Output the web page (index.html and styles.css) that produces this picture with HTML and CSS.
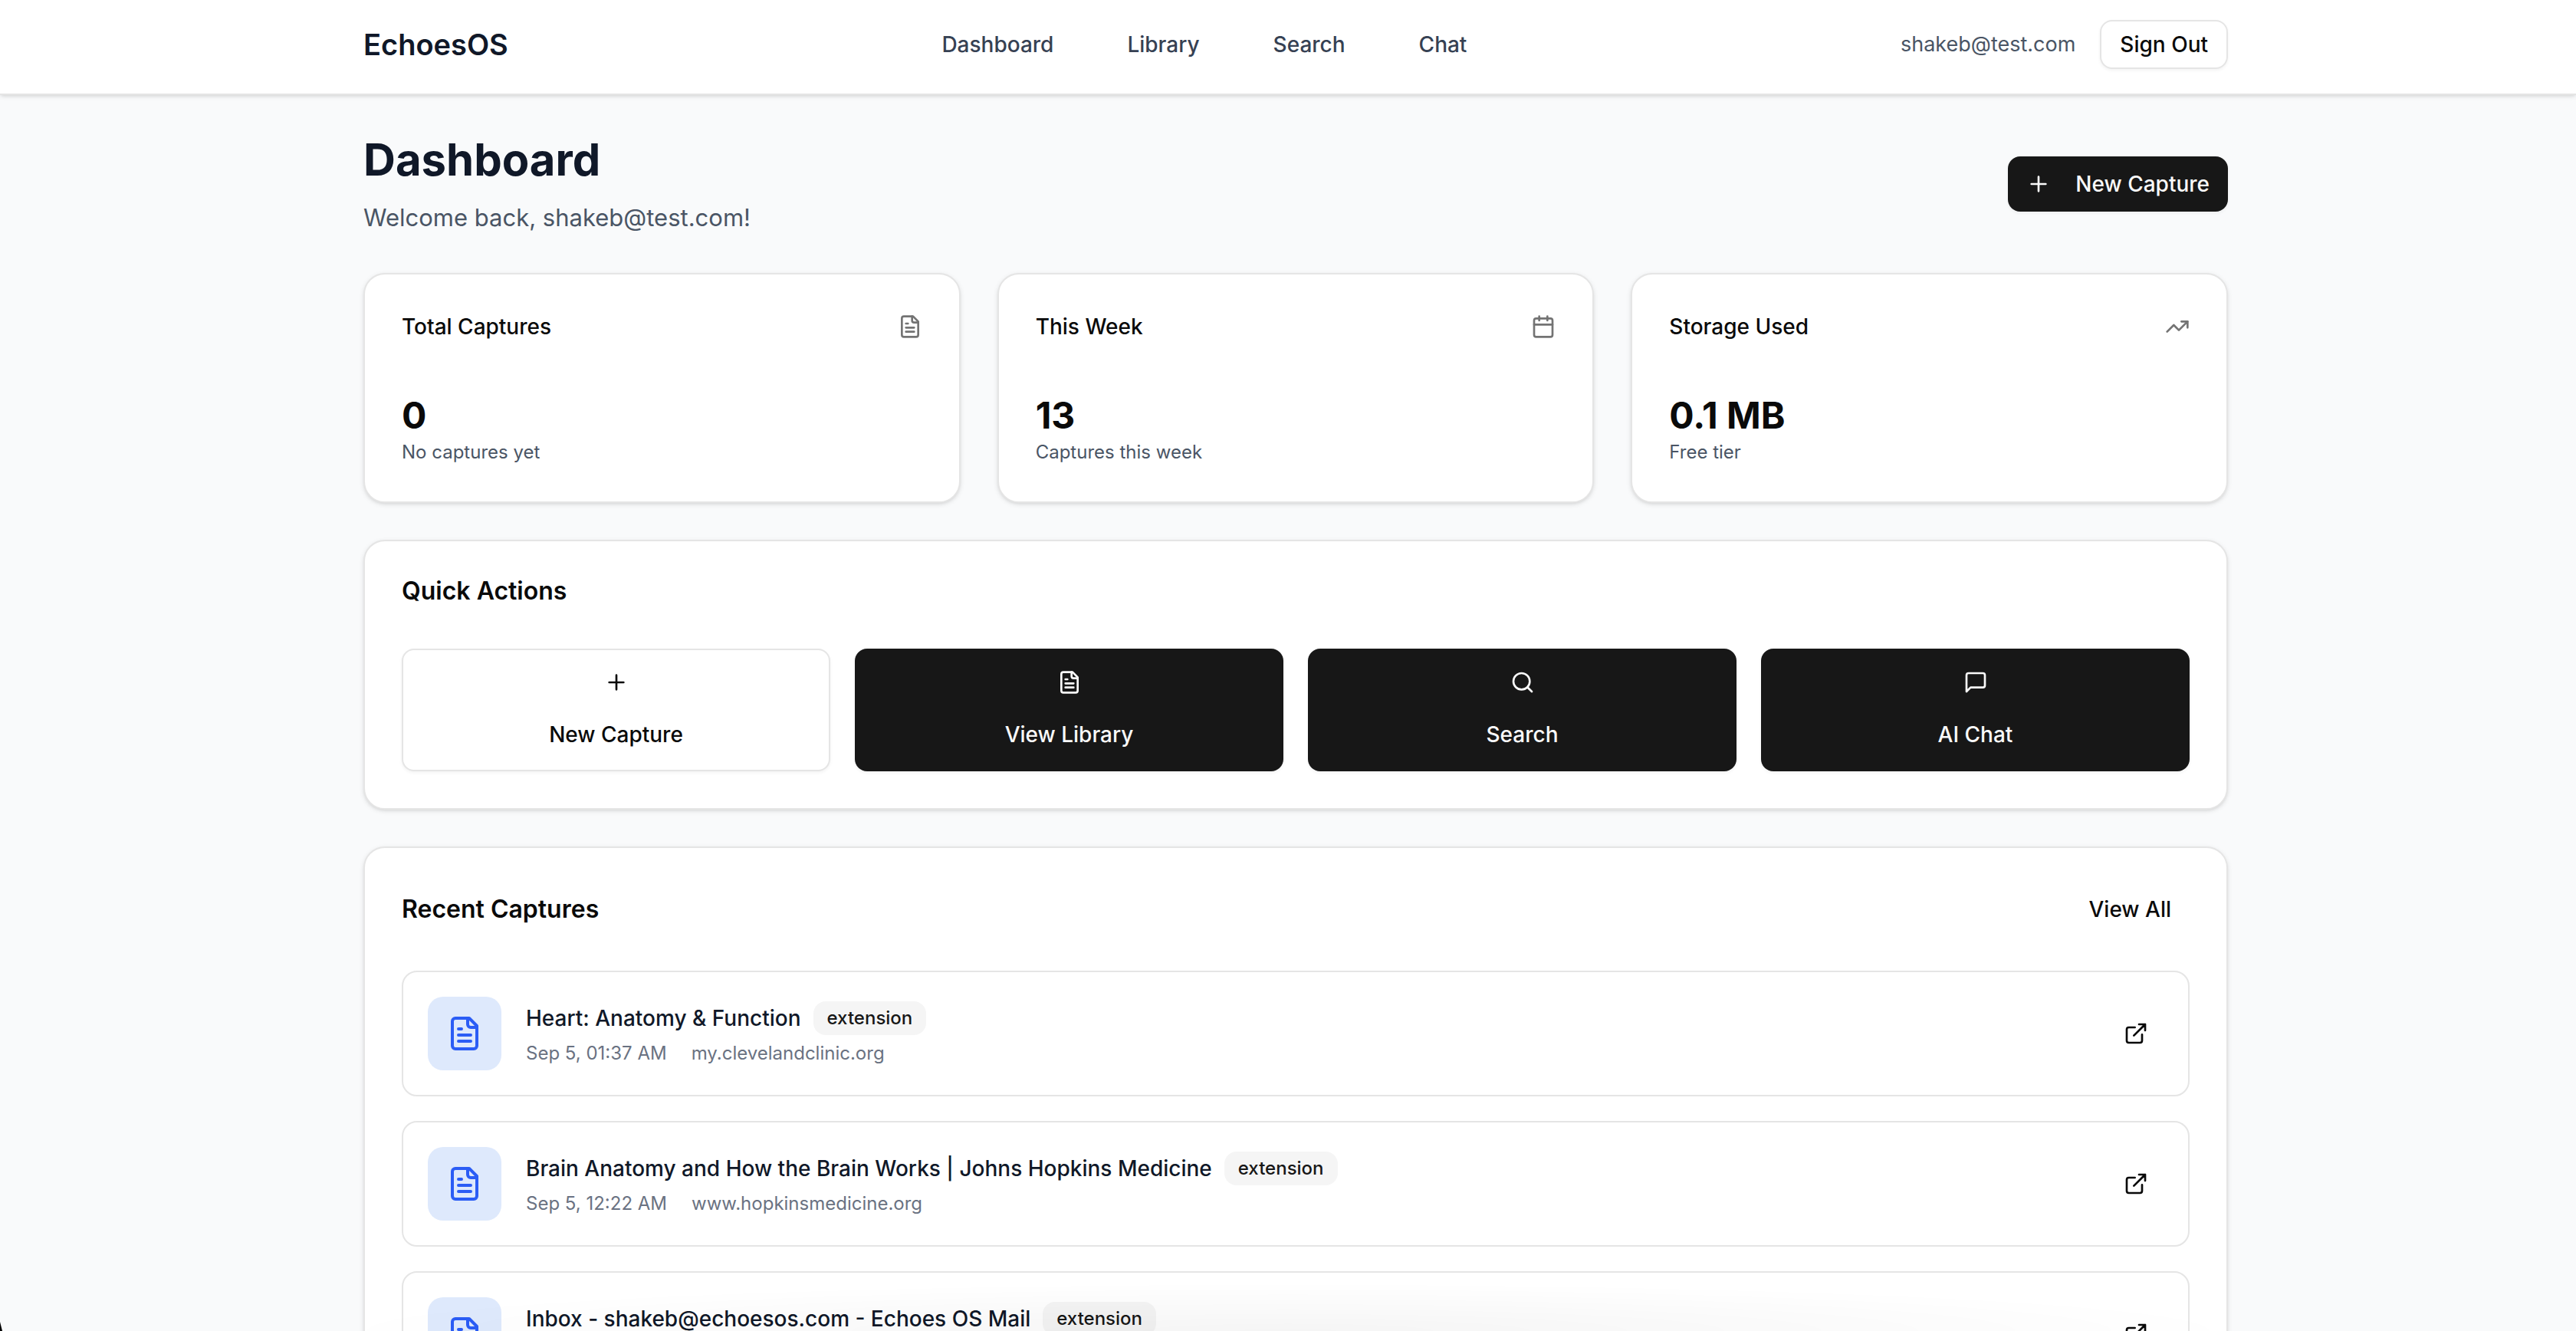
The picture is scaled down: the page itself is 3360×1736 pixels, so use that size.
FILE: index.html
```html
<!DOCTYPE html>
<html lang="en">
<head>
  <meta charset="UTF-8">
  <meta name="viewport" content="width=device-width, initial-scale=1.0">
  <title>EchoesOS</title>
  <link rel="stylesheet" href="styles.css">
</head>
<body>
  <!-- shared icons -->
  <svg class="sprite" aria-hidden="true">
    <symbol id="i-plus" viewBox="0 0 24 24"><path d="M5 12h14M12 5v14"/></symbol>
    <symbol id="i-file" viewBox="0 0 24 24">
      <path d="M15 2H6a2 2 0 0 0-2 2v16a2 2 0 0 0 2 2h12a2 2 0 0 0 2-2V7Z"/>
      <path d="M14 2v4a2 2 0 0 0 2 2h4M10 9H8M16 13H8M16 17H8"/>
    </symbol>
    <symbol id="i-calendar" viewBox="0 0 24 24">
      <path d="M8 2v4M16 2v4M3 10h18"/>
      <rect x="3" y="4" width="18" height="18" rx="2"/>
    </symbol>
    <symbol id="i-trend" viewBox="0 0 24 24"><path d="M16 7h6v6"/><path d="m22 7-8.500 8.500-5-5L2 17"/></symbol>
    <symbol id="i-search" viewBox="0 0 24 24"><circle cx="11" cy="11" r="8"/><path d="m21 21-4.340-4.340"/></symbol>
    <symbol id="i-chat" viewBox="0 0 24 24"><path d="M21 15a2 2 0 0 1-2 2H7l-4 4V5a2 2 0 0 1 2-2h14a2 2 0 0 1 2 2z"/></symbol>
    <symbol id="i-external" viewBox="0 0 24 24">
      <path d="M15 3h6v6M10 14 21 3M18 13v6a2 2 0 0 1-2 2H5a2 2 0 0 1-2-2V8a2 2 0 0 1 2-2h6"/>
    </symbol>
  </svg>

  <header class="header">
    <div class="container nav">
      <a href="#" class="logo">EchoesOS</a>
      <nav class="nav-links">
        <a href="#dashboard">Dashboard</a>
        <a href="#library">Library</a>
        <a href="#search">Search</a>
        <a href="#chat">Chat</a>
      </nav>
      <div class="user">
        <span class="email">shakeb@test.com</span>
        <button class="btn btn-outline btn-sm">Sign Out</button>
      </div>
    </div>
  </header>

  <main class="container main" id="dashboard">
    <div class="page-head">
      <div>
        <h1>Dashboard</h1>
        <p class="welcome">Welcome back, shakeb@test.com!</p>
      </div>
      <button class="btn btn-dark"><svg class="icon"><use href="#i-plus"/></svg>New Capture</button>
    </div>

    <section class="stats">
      <article class="card stat">
        <div class="stat-head"><h3>Total Captures</h3><svg class="icon"><use href="#i-file"/></svg></div>
        <div class="stat-value">0</div>
        <p class="stat-note">No captures yet</p>
      </article>
      <article class="card stat">
        <div class="stat-head"><h3>This Week</h3><svg class="icon"><use href="#i-calendar"/></svg></div>
        <div class="stat-value">13</div>
        <p class="stat-note">Captures this week</p>
      </article>
      <article class="card stat">
        <div class="stat-head"><h3>Storage Used</h3><svg class="icon"><use href="#i-trend"/></svg></div>
        <div class="stat-value">0.1 MB</div>
        <p class="stat-note">Free tier</p>
      </article>
    </section>

    <section class="card">
      <h2 class="actions-title">Quick Actions</h2>
      <div class="actions">
        <button class="btn btn-outline action"><svg class="icon"><use href="#i-plus"/></svg>New Capture</button>
        <button class="btn btn-dark action"><svg class="icon"><use href="#i-file"/></svg>View Library</button>
        <button class="btn btn-dark action"><svg class="icon"><use href="#i-search"/></svg>Search</button>
        <button class="btn btn-dark action"><svg class="icon"><use href="#i-chat"/></svg>AI Chat</button>
      </div>
    </section>

    <section class="card">
      <div class="recent-head">
        <h2>Recent Captures</h2>
        <button class="btn btn-sm">View All</button>
      </div>
      <div class="captures">
        <article class="capture">
          <div class="thumb"><svg class="icon"><use href="#i-file"/></svg></div>
          <div class="capture-body">
            <div class="capture-title"><h3>Heart: Anatomy &amp; Function</h3><span class="badge">extension</span></div>
            <div class="meta"><span>Sep 5, 01:37 AM</span><span>my.clevelandclinic.org</span></div>
          </div>
          <button class="btn btn-icon" aria-label="Open capture"><svg class="icon"><use href="#i-external"/></svg></button>
        </article>
        <article class="capture">
          <div class="thumb"><svg class="icon"><use href="#i-file"/></svg></div>
          <div class="capture-body">
            <div class="capture-title"><h3>Brain Anatomy and How the Brain Works | Johns Hopkins Medicine</h3><span class="badge">extension</span></div>
            <div class="meta"><span>Sep 5, 12:22 AM</span><span>www.hopkinsmedicine.org</span></div>
          </div>
          <button class="btn btn-icon" aria-label="Open capture"><svg class="icon"><use href="#i-external"/></svg></button>
        </article>
        <article class="capture">
          <div class="thumb"><svg class="icon"><use href="#i-file"/></svg></div>
          <div class="capture-body">
            <div class="capture-title"><h3>Inbox - shakeb@echoesos.com - Echoes OS Mail</h3><span class="badge">extension</span></div>
          </div>
          <button class="btn btn-icon" aria-label="Open capture"><svg class="icon"><use href="#i-external"/></svg></button>
        </article>
      </div>
    </section>
  </main>

  <div class="bottom-shade"></div>
  <div class="corner"></div>
</body>
</html>
```
FILE: styles.css
```css
*, *::before, *::after { box-sizing: border-box; margin: 0; padding: 0; }
body { height: 100vh; overflow: hidden; font-family: Inter, "Liberation Sans", sans-serif; font-size: 28px; line-height: 40px; background: #f9fafb; color: #0a0a0a; }
a { color: inherit; text-decoration: none; }
h1 { font-size: 58px; line-height: 72px; font-weight: 700; color: #101828; }
h2 { font-size: 32px; line-height: 34px; font-weight: 600; }
h3 { font-size: 28px; line-height: 40px; font-weight: 500; }

.sprite { display: none; }
.icon { width: 32px; height: 32px; flex-shrink: 0; fill: none; stroke: currentColor; stroke-width: 2; stroke-linecap: round; stroke-linejoin: round; }

.container { max-width: 2560px; margin: 0 auto; padding: 0 54px 0 74px; }

/* top bar */
.header { background: #fff; border-bottom: 2px solid #e5e5e5; box-shadow: 0 2px 6px rgba(0, 0, 0, 0.1), 0 2px 4px -2px rgba(0, 0, 0, 0.1); }
.nav { display: flex; justify-content: space-between; align-items: center; padding-top: 26px; padding-bottom: 32px; }
.logo { font-size: 38px; line-height: 56px; font-weight: 600; color: #101828; }
.nav-links { display: flex; gap: 96px; font-weight: 500; color: #364153; }
.user { display: flex; align-items: center; gap: 32px; }
.email { font-size: 27px; color: #4a5565; }

/* buttons */
.btn { display: inline-flex; align-items: center; justify-content: center; gap: 32px; height: 72px; padding: 0 24px; border: none; border-radius: 16px; background: none; font: inherit; font-weight: 500; color: #0a0a0a; white-space: nowrap; cursor: pointer; }
.btn-sm { height: 64px; }
.btn-icon { height: 64px; padding: 0 20px; }
.btn-outline { background: #fff; border: 2px solid #e5e5e5; box-shadow: 0 2px 4px rgba(0, 0, 0, 0.05); }
.btn-dark { background: #171717; color: #fafafa; box-shadow: 0 2px 4px rgba(0, 0, 0, 0.05); }

.main { display: flex; flex-direction: column; gap: 48px; padding-top: 48px; padding-bottom: 48px; }
.page-head { display: flex; justify-content: space-between; align-items: center; }
.welcome { margin-top: 16px; font-size: 31px; line-height: 48px; color: #4a5565; }

.card { padding: 48px; background: #fff; border: 2px solid #e5e5e5; border-radius: 28px; box-shadow: 0 2px 6px rgba(0, 0, 0, 0.1), 0 2px 4px -2px rgba(0, 0, 0, 0.1); }

.stats { display: grid; grid-template-columns: repeat(3, 1fr); gap: 48px; }
.stat-head { display: flex; justify-content: space-between; align-items: center; margin-bottom: 64px; }
.stat-head .icon { color: #737373; }
.stat-value { font-size: 48px; line-height: 64px; font-weight: 700; }
.stat-note { font-size: 24px; line-height: 32px; color: #4a5565; }

.actions-title { margin-bottom: 58px; }
.actions { display: grid; grid-template-columns: repeat(4, 1fr); gap: 32px; }
.action { flex-direction: column; height: 160px; }

/* recent captures */
.recent-head { display: flex; justify-content: space-between; align-items: center; margin-bottom: 48px; }
.captures { display: flex; flex-direction: column; gap: 32px; }
.capture { display: flex; align-items: center; gap: 32px; padding: 32px; border: 2px solid #e5e5e5; border-radius: 20px; }
.thumb { display: flex; align-items: center; justify-content: center; width: 96px; height: 96px; border-radius: 20px; background: #dee9fc; color: #2b5df5; }
.thumb .icon { width: 48px; height: 48px; }
.capture-body { flex: 1; min-height: 84px; }
.capture-title { display: flex; align-items: center; gap: 16px; color: #101828; }
.badge { padding: 6px 18px; border-radius: 16px; background: #f5f5f5; color: #171717; font-size: 24px; line-height: 32px; font-weight: 500; }
.meta { display: flex; gap: 32px; margin-top: 8px; font-size: 24px; line-height: 32px; color: #6a7282; }

/* soft shade along the bottom edge and the rounded window corner */
.bottom-shade { position: fixed; left: 12%; right: 12%; bottom: 0; height: 64px; background: radial-gradient(ellipse at bottom, rgba(0, 0, 0, 0.04), rgba(0, 0, 0, 0) 70%); pointer-events: none; }
.corner { position: fixed; left: 0; bottom: 0; width: 3px; height: 12px; background: #000; clip-path: polygon(0 0, 100% 100%, 0 100%); }
```
